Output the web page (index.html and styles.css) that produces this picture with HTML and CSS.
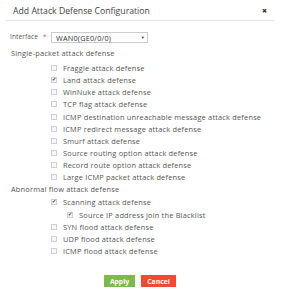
FILE: index.html
```html
<!DOCTYPE html>
<html lang="en">
<head>
    <meta charset="UTF-8">
    <title>Add Attack Defense Configuration</title>
    <link rel="stylesheet" href="styles.css">
</head>
<body>
    <div class="dialog">
        <header class="dialog-head">
            <h1>Add Attack Defense Configuration</h1>
            <span class="close">&#x2716;</span>
        </header>

        <div class="form">
            <div class="field">
                <label class="field-label">Interface<span class="req">*</span></label>
                <div class="select">
                    <span>WAN0(GE0/0/0)</span>
                    <span class="arrow">&#9660;</span>
                </div>
            </div>

            <div class="group-title first">Single-packet attack defense</div>
            <ul class="checks">
                <li><span class="box"></span>Fraggle attack defense</li>
                <li><span class="box checked"></span>Land attack defense</li>
                <li><span class="box"></span>WinNuke attack defense</li>
                <li><span class="box"></span>TCP flag attack defense</li>
                <li><span class="box"></span>ICMP destination unreachable message attack defense</li>
                <li><span class="box"></span>ICMP redirect message attack defense</li>
                <li><span class="box"></span>Smurf attack defense</li>
                <li><span class="box"></span>Source routing option attack defense</li>
                <li><span class="box"></span>Record route option attack defense</li>
                <li><span class="box"></span>Large ICMP packet attack defense</li>
            </ul>

            <div class="group-title">Abnormal flow attack defense</div>
            <ul class="checks tight">
                <li><span class="box checked"></span>Scanning attack defense</li>
                <li class="sub"><span class="box checked"></span>Source IP address join the Blacklist</li>
                <li><span class="box"></span>SYN flood attack defense</li>
                <li><span class="box"></span>UDP flood attack defense</li>
                <li><span class="box"></span>ICMP flood attack defense</li>
            </ul>
        </div>

        <div class="actions">
            <button class="btn apply">Apply</button>
            <button class="btn cancel">Cancel</button>
        </div>
    </div>
</body>
</html>
```

FILE: styles.css
```css
body {
    margin: 0;
    background-color: #fff;
    font-family: "Open Sans", "Liberation Sans", Arial, sans-serif;
    color: #555;
}
.dialog {
    width: 281px;
    height: 299px;
    box-sizing: border-box;
    padding: 0 7px 0 6px;
}
.dialog-head {
    display: flex;
    justify-content: space-between;
    align-items: center;
    height: 21px;
    padding: 1px 7px 0 7px;
    box-sizing: border-box;
    border-bottom: 1px solid #e6e6e6;
}
.dialog-head h1 {
    margin: 0;
    font-size: 8.7px;
    font-weight: normal;
    color: #444;
}
.close {
    font-size: 6px;
    color: #333;
}
.form {
    padding: 11px 0 0 4px;
    letter-spacing: 0.2px;
}
.field {
    display: flex;
    align-items: center;
    height: 11px;
}
.field-label {
    width: 41px;
    font-size: 6.5px;
    letter-spacing: 0.1px;
    color: #555;
    margin-top: -2px;
}
.req {
    color: #f0506e;
    margin-left: 5px;
}
.select {
    display: flex;
    justify-content: space-between;
    align-items: center;
    width: 97px;
    height: 11px;
    box-sizing: border-box;
    border: 1px solid #ccc;
    padding: 0 2px 0 4px;
    font-size: 7.3px;
    color: #333;
}
.arrow {
    font-size: 4px;
}
.group-title {
    height: 12px;
    line-height: 12px;
    font-size: 7.4px;
    color: #555;
    margin-left: 1px;
}
.group-title.first {
    margin-top: 4px;
}
.checks {
    list-style: none;
    margin: 3px 0 0 0;
    padding: 0 0 0 41px;
}
.checks.tight {
    margin-top: 1px;
}
.checks li {
    display: flex;
    align-items: center;
    height: 12.15px;
    font-size: 7.4px;
    color: #555;
}
.checks li.sub {
    padding-left: 16px;
}
.box {
    width: 4px;
    height: 4px;
    border: 1px solid #cfcfcf;
    margin-right: 6px;
    position: relative;
    background: #f7f7f7;
}
.box.checked::after {
    content: "\2714";
    position: absolute;
    left: 0;
    top: -2px;
    font-size: 5px;
    color: #333;
}
.actions {
    display: flex;
    justify-content: center;
    gap: 6px;
    margin-top: 18px;
}
.btn {
    height: 12px;
    padding: 0;
    border: none;
    color: #fff;
    font-family: "Open Sans", "Liberation Sans", Arial, sans-serif;
    font-size: 6.8px;
    font-weight: bold;
}
.apply {
    width: 31px;
    background-color: #7cbb4a;
}
.cancel {
    width: 35px;
    background-color: #f24a2e;
}
```
